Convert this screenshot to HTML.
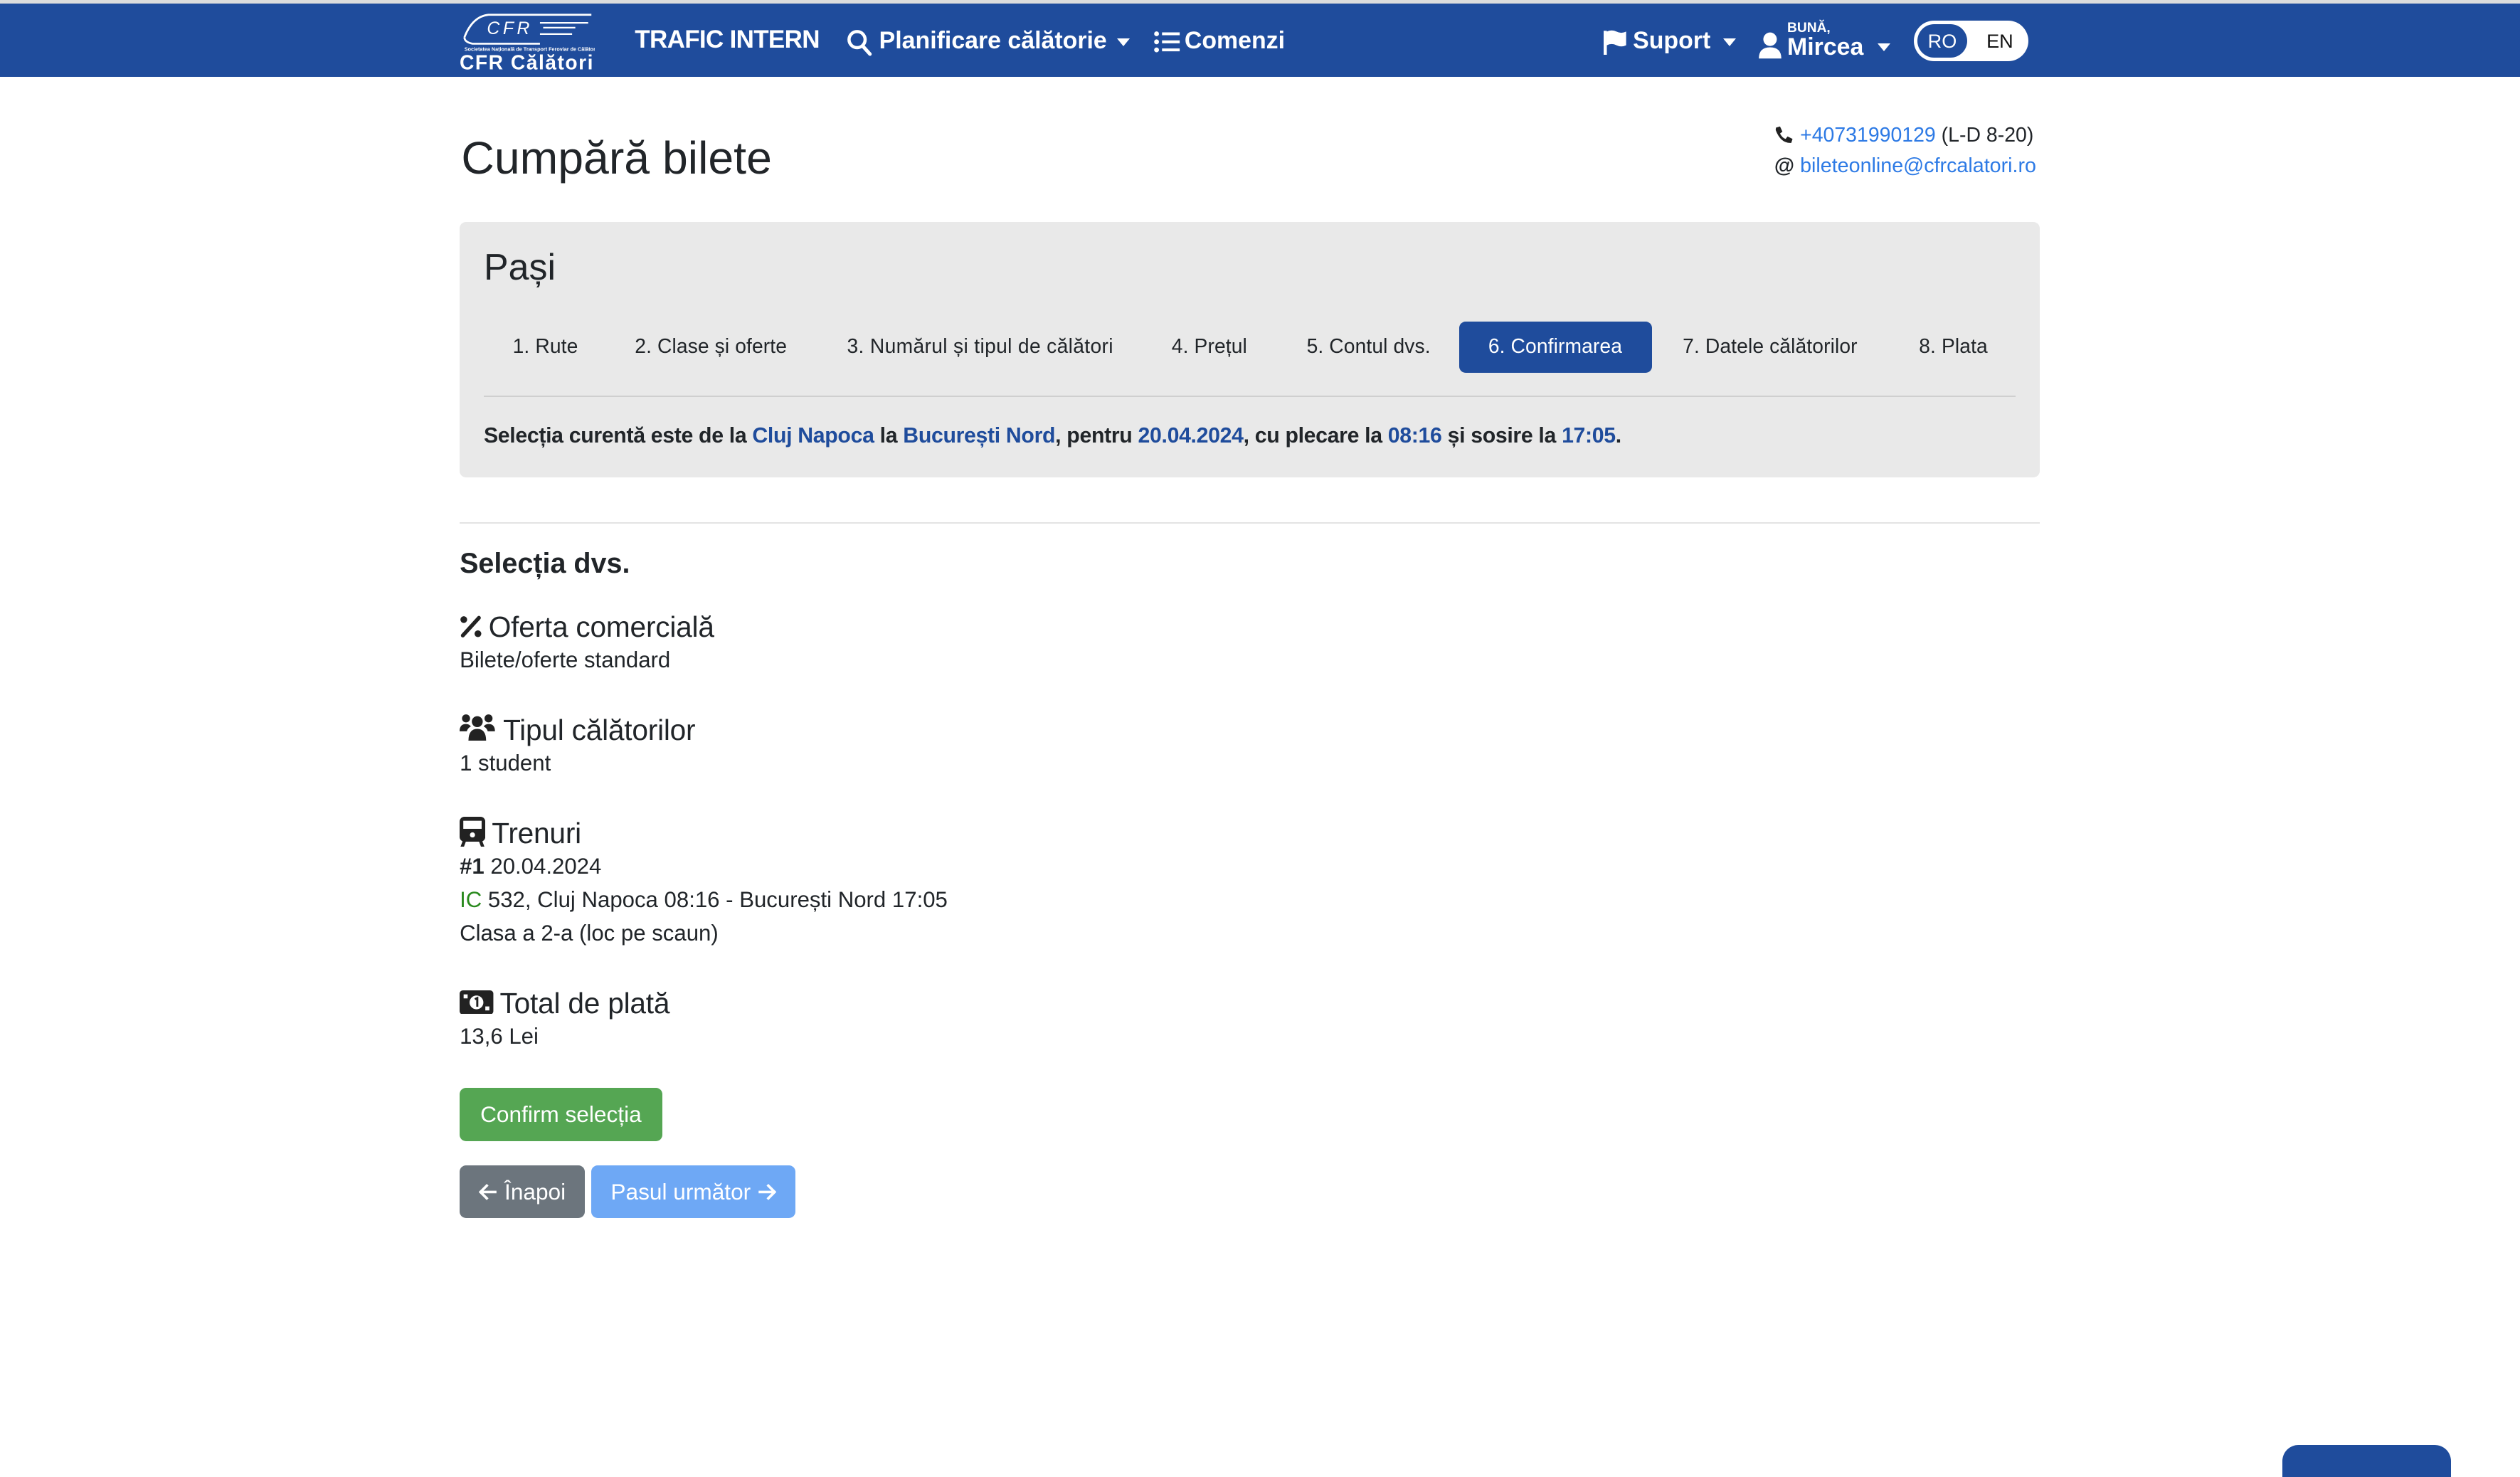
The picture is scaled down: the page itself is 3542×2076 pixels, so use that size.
<!DOCTYPE html>
<html><head><meta charset="utf-8">
<style>
html{zoom:2.259}
body{margin:0;width:1568px;height:911px;position:relative;overflow:hidden;background:#fff;font-family:"Liberation Sans",sans-serif;color:#212529}
.a{position:absolute;white-space:nowrap}
.nav{position:absolute;left:0;top:2px;width:1568px;height:46px;background:#1f4c9c}
.topline{position:absolute;left:0;top:0;width:1568px;height:2px;background:#dcdcdc}
.nt{color:#fff;font-weight:bold;font-size:15px;letter-spacing:-0.3px}
.caret{width:0;height:0;border-left:4px solid transparent;border-right:4px solid transparent;border-top:5px solid #fff}
.blue{color:#1f4c9c}
.link{color:#2d7ae5}
.h{font-size:18px;letter-spacing:-0.1px}
.t{font-size:13.8px;letter-spacing:0}
.step{font-size:12.5px;top:208px;letter-spacing:0.05px}
.btn{position:absolute;border-radius:4px;color:#fff;font-size:14px;text-align:center;line-height:33px;height:33px}
</style></head><body>
<div class="topline"></div>
<div class="nav"></div>
<svg class="a" style="left:286px;top:6px" width="84" height="40" viewBox="0 0 84 40">
<path d="M3 17 Q8 4 18 3 L82 3" stroke="#fff" stroke-width="1.2" fill="none"/>
<path d="M3 17 Q3 20 8 21 L50 21" stroke="#fff" stroke-width="1.2" fill="none"/>
<text x="17" y="15" fill="#fff" font-family="Liberation Sans" font-style="italic" font-size="11" letter-spacing="2">CFR</text>
<path d="M50 8H80M52 11H72M50 15H70" stroke="#fff" stroke-width="1"/>
<text x="3" y="25.5" fill="#fff" font-family="Liberation Sans" font-weight="bold" font-size="3.2">Societatea Națională de Transport Feroviar de Călători</text>
<text x="0" y="37" fill="#fff" font-family="Liberation Sans" font-weight="bold" font-size="12.5" textLength="83">CFR Călători</text>
</svg>
<div class="a nt" style="left:395px;top:16px;font-size:15.5px">TRAFIC INTERN</div>
<svg class="a" style="left:527px;top:18px" width="16" height="17" viewBox="0 0 16 17"><circle cx="6.5" cy="6.5" r="5" stroke="#fff" stroke-width="2" fill="none"/><path d="M10 10.5 L14.5 15.5" stroke="#fff" stroke-width="2.2" stroke-linecap="round"/></svg>
<div class="a nt" style="left:547px;top:17px;letter-spacing:0">Planificare călătorie</div>
<div class="a caret" style="left:695px;top:24px"></div>
<svg class="a" style="left:718px;top:19px" width="17" height="14" viewBox="0 0 17 14"><circle cx="1.6" cy="2" r="1.5" fill="#fff"/><circle cx="1.6" cy="7" r="1.5" fill="#fff"/><circle cx="1.6" cy="12" r="1.5" fill="#fff"/><path d="M5 2H16M5 7H16M5 12H16" stroke="#fff" stroke-width="1.8"/></svg>
<div class="a nt" style="left:737px;top:17px;letter-spacing:0">Comenzi</div>
<svg class="a" style="left:998px;top:18px" width="15" height="16" viewBox="0 0 15 16"><path d="M1 1V16" stroke="#fff" stroke-width="2"/><path d="M2 1.5 Q5 0 8 1.5 T14 1.5 V10 Q11 11.5 8 10 T2 10Z" fill="#fff"/></svg>
<div class="a nt" style="left:1016px;top:17px;letter-spacing:0">Suport</div>
<div class="a caret" style="left:1072px;top:24px"></div>
<svg class="a" style="left:1094px;top:20px" width="15" height="17" viewBox="0 0 15 17"><circle cx="7.5" cy="4.5" r="4.2" fill="#fff"/><path d="M0.5 16.5 Q0.5 9.5 7.5 9.5 Q14.5 9.5 14.5 16.5Z" fill="#fff"/></svg>
<div class="a nt" style="left:1112px;top:13px;font-size:8.5px;letter-spacing:0">BUNĂ,</div>
<div class="a nt" style="left:1112px;top:21px;letter-spacing:0">Mircea</div>
<div class="a caret" style="left:1168px;top:27px"></div>
<div class="a" style="left:1191px;top:13px;width:71px;height:25px;border-radius:13px;background:#fff"></div>
<div class="a" style="left:1193px;top:15px;width:31px;height:21px;border-radius:11px;background:#1f4c9c;color:#fff;font-size:12px;line-height:21px;text-align:center">RO</div>
<div class="a" style="left:1236px;top:15px;font-size:12px;line-height:21px;color:#111">EN</div>

<div class="a" style="left:287px;top:82px;font-size:28.5px;letter-spacing:0">Cumpără bilete</div>
<svg class="a" style="left:1104px;top:78px" width="12" height="12" viewBox="0 0 12 12"><path d="M1 1.5 L3.5 0.8 L5 4 L3.5 5.2 Q5 8 7 8.5 L8.2 7 L11.3 8.5 L10.5 11 Q4 11.5 0.8 3Z" fill="#222"/></svg>
<div class="a t" style="left:1120px;top:77px;font-size:12.6px"><span class="link">+40731990129</span> (L-D 8-20)</div>
<div class="a t" style="left:1104px;top:96px;font-size:12.8px;font-weight:bold">@</div>
<div class="a t link" style="left:1120px;top:96px;font-size:12.7px;letter-spacing:0">bileteonline@cfrcalatori.ro</div>

<div class="a" style="left:286px;top:138px;width:983px;height:159px;background:#e9e9e9;border-radius:4px"></div>
<div class="a" style="left:301px;top:153px;font-size:23px">Pași</div>
<div class="a" style="left:908px;top:200px;width:120px;height:32px;background:#1f4c9c;border-radius:4px"></div>
<div class="a step" style="left:319px">1. Rute</div>
<div class="a step" style="left:395px">2. Clase și oferte</div>
<div class="a step" style="left:527px;letter-spacing:0.15px">3. Numărul și tipul de călători</div>
<div class="a step" style="left:729px">4. Prețul</div>
<div class="a step" style="left:813px">5. Contul dvs.</div>
<div class="a step" style="left:926px;color:#fff">6. Confirmarea</div>
<div class="a step" style="left:1047px">7. Datele călătorilor</div>
<div class="a step" style="left:1194px">8. Plata</div>
<div class="a" style="left:301px;top:246px;width:953px;height:1px;background:#cfcfcf"></div>
<div class="a" style="left:301px;top:264px;font-size:13.4px;font-weight:bold;letter-spacing:-0.15px">Selecția curentă este de la <span class="blue">Cluj Napoca</span> la <span class="blue">București Nord</span>, pentru <span class="blue">20.04.2024</span>, cu plecare la <span class="blue">08:16</span> și sosire la <span class="blue">17:05</span>.</div>
<div class="a" style="left:286px;top:325px;width:983px;height:1px;background:#e3e3e3"></div>

<div class="a" style="left:286px;top:341px;font-size:17.5px;font-weight:bold">Selecția dvs.</div>

<svg class="a" style="left:286px;top:383px" width="14" height="14" viewBox="0 0 14 14"><path d="M12 1.5 L2 12.5" stroke="#222" stroke-width="2.4" stroke-linecap="round"/><circle cx="2.6" cy="2.6" r="2.1" fill="#222"/><circle cx="11.4" cy="11.4" r="2.1" fill="#222"/></svg>
<div class="a h" style="left:304px;top:380px">Oferta comercială</div>
<div class="a t" style="left:286px;top:403px">Bilete/oferte standard</div>

<svg class="a" style="left:286px;top:444px" width="22" height="17" viewBox="0 0 22 17"><circle cx="4" cy="3" r="2.5" fill="#222"/><circle cx="18" cy="3" r="2.5" fill="#222"/><circle cx="11" cy="5" r="3.4" fill="#222"/><path d="M0 11 Q0 6.5 4 6.5 Q6 6.5 7 8 Q5 9 4.5 11Z M22 11 Q22 6.5 18 6.5 Q16 6.5 15 8 Q17 9 17.5 11Z" fill="#222"/><path d="M5.5 17 Q5.5 9.5 11 9.5 Q16.5 9.5 16.5 17Z" fill="#222"/></svg>
<div class="a h" style="left:313px;top:444px">Tipul călătorilor</div>
<div class="a t" style="left:286px;top:467px">1 student</div>

<svg class="a" style="left:286px;top:508px" width="16" height="19" viewBox="0 0 16 19"><rect x="0" y="0" width="16" height="15.5" rx="3" fill="#222"/><rect x="2.3" y="2.5" width="11.4" height="5" fill="#fff"/><circle cx="8" cy="11.3" r="1.6" fill="#fff"/><path d="M3 15 L1.5 19 M13 15 L14.5 19" stroke="#222" stroke-width="2"/></svg>
<div class="a h" style="left:306px;top:508px">Trenuri</div>
<div class="a t" style="left:286px;top:531px"><b>#1</b> 20.04.2024</div>
<div class="a t" style="left:286px;top:552px;letter-spacing:0"><span style="color:#2a8a1e">IC</span> 532, Cluj Napoca 08:16 - București Nord 17:05</div>
<div class="a t" style="left:286px;top:573px;letter-spacing:0">Clasa a 2-a (loc pe scaun)</div>

<svg class="a" style="left:286px;top:616px" width="21" height="15" viewBox="0 0 21 15"><rect x="0" y="0" width="21" height="15" rx="2" fill="#222"/><circle cx="10.5" cy="7.5" r="4.3" fill="#fff"/><path d="M9.5 5.5 L11 4.8 V10.2" stroke="#222" stroke-width="1.3" fill="none"/><rect x="2.5" y="2.5" width="2.5" height="2.5" fill="#fff"/><rect x="16" y="10" width="2.5" height="2.5" fill="#fff"/></svg>
<div class="a h" style="left:311px;top:614px">Total de plată</div>
<div class="a t" style="left:286px;top:637px">13,6 Lei</div>

<div class="btn" style="left:286px;top:677px;width:126px;background:#55a653">Confirm selecția</div>
<div class="btn" style="left:286px;top:725px;width:78px;background:#6c757d"><svg width="12" height="11" viewBox="0 0 12 11" style="vertical-align:-1px"><path d="M11 5.5H1.5M5.5 1L1 5.5L5.5 10" stroke="#fff" stroke-width="1.6" fill="none"/></svg> Înapoi</div>
<div class="btn" style="left:368px;top:725px;width:127px;background:#6ea8f5">Pasul următor <svg width="12" height="11" viewBox="0 0 12 11" style="vertical-align:-1px"><path d="M1 5.5H10.5M6.5 1L11 5.5L6.5 10" stroke="#fff" stroke-width="1.6" fill="none"/></svg></div>

<div class="a" style="left:1420px;top:899px;width:105px;height:20px;background:#1f4c9c;border-radius:10px 10px 0 0"></div>
</body></html>
